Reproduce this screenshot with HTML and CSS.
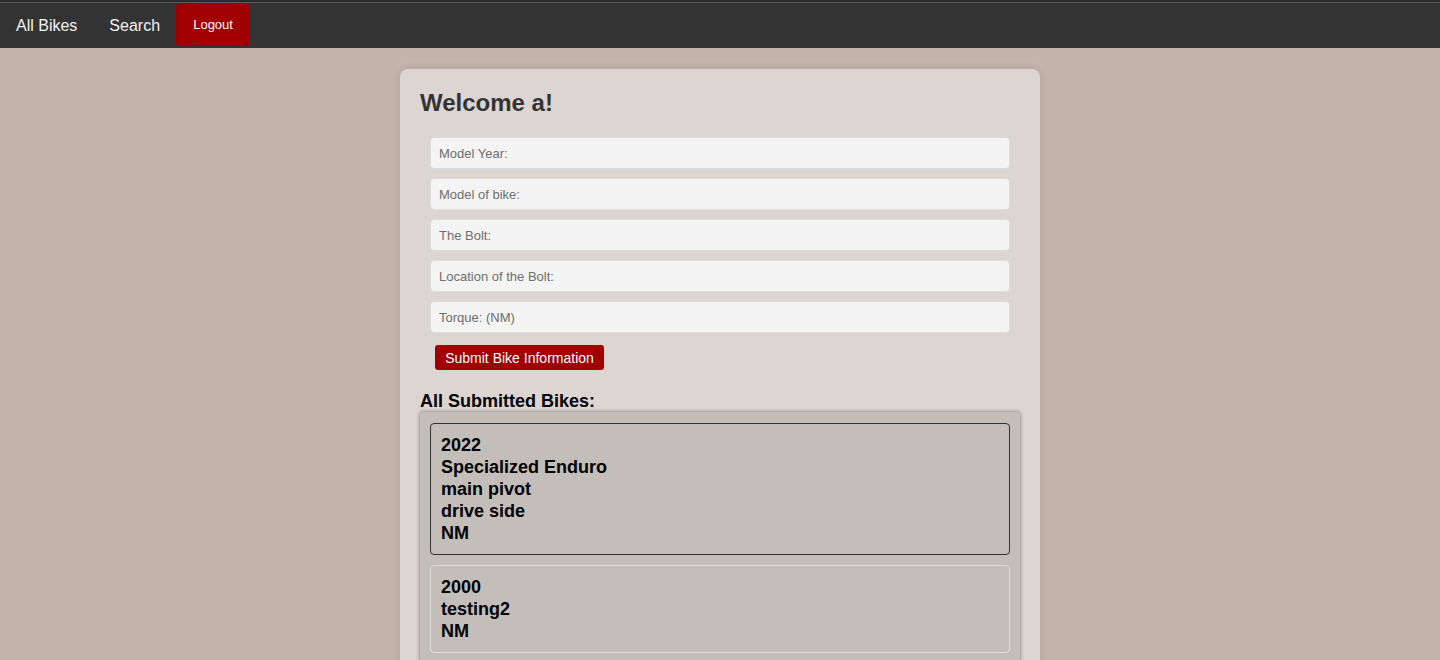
FILE: index.html
```html
<!DOCTYPE html>
<html>
<head>
<meta charset="utf-8">
<title>Bikes</title>
<link rel="stylesheet" href="styles.css">
</head>
<body>
<nav class="topnav">
  <a class="nav-link" href="#">All Bikes</a>
  <a class="nav-link" href="#">Search</a>
  <button class="logout">Logout</button>
</nav>
<main class="page">
  <section class="card">
    <h1 class="welcome">Welcome a!</h1>
    <form class="bike-form">
      <input class="field" placeholder="Model Year:">
      <input class="field" placeholder="Model of bike:">
      <input class="field" placeholder="The Bolt:">
      <input class="field" placeholder="Location of the Bolt:">
      <input class="field" placeholder="Torque: (NM)">
      <button type="button" class="submit">Submit Bike Information</button>
    </form>
    <h2 class="list-title">All Submitted Bikes:</h2>
    <div class="bike-list">
      <div class="bike active">
        <div>2022</div>
        <div>Specialized Enduro</div>
        <div>main pivot</div>
        <div>drive side</div>
        <div>NM</div>
      </div>
      <div class="bike">
        <div>2000</div>
        <div>testing2</div>
        <div>NM</div>
      </div>
    </div>
  </section>
</main>
</body>
</html>
```
FILE: styles.css
```css
* { box-sizing: border-box; }
html, body { margin: 0; padding: 0; }
body {
  background: #c4b4ac;
  font-family: "Liberation Sans", Arial, sans-serif;
  height: 660px;
  overflow: hidden;
}
.topnav {
  display: flex;
  align-items: flex-start;
  height: 48px;
  background: #333333;
  border-top: 2px solid #2a2a2a;
  box-shadow: inset 0 1px 0 #5a5a5a;
}
.nav-link {
  color: #f2f2f2;
  text-decoration: none;
  font-size: 16px;
  padding: 1px 16px 0;
  line-height: 46px;
}
.logout {
  margin-top: 2px;
  background: #a00000;
  color: #fff;
  border: none;
  border-radius: 3px;
  width: 74px;
  height: 41px;
  font-family: inherit;
  font-size: 13px;
  padding: 0;
}
.page {
  display: flex;
  justify-content: center;
  padding-top: 21px;
}
.card {
  width: 640px;
  background: #ddd5d2;
  border-radius: 8px;
  box-shadow: 0 0 10px rgba(0,0,0,0.1);
  padding: 18px 20px 20px;
  height: 620px;
}
.welcome {
  margin: 2px 0 20px;
  font-size: 24px;
  color: #333;
  font-weight: bold;
  line-height: 28px;
}
.bike-form {
  display: flex;
  flex-direction: column;
  gap: 9px;
  padding: 0 10px;
}
.field {
  height: 32px;
  width: 580px;
  background: #f4f4f4;
  border: 1px solid #dcdcdc;
  border-radius: 4px;
  padding: 0 8px;
  font-family: inherit;
  font-size: 13px;
  color: #333;
}
.field::placeholder { color: #6e6e6e; }
.submit {
  align-self: flex-start;
  margin-top: 3px;
  margin-left: 5px;
  background: #a00000;
  color: #fff;
  border: none;
  border-radius: 3px;
  height: 25px;
  width: 169px;
  padding: 0;
  font-family: inherit;
  font-size: 14px;
}
.list-title {
  margin: 21px 0 0;
  font-size: 18px;
  line-height: 21px;
  color: #000;
}
.bike-list {
  background: #c4bebb;
  border-radius: 4px;
  box-shadow: 0 0 4px rgba(0,0,0,0.45);
  padding: 11px 10px;
  display: flex;
  flex-direction: column;
  gap: 10px;
}
.bike {
  border: 1px solid #e0dcda;
  border-radius: 4px;
  padding: 10px 10px 10px;
  font-size: 18px;
  font-weight: bold;
  line-height: 22px;
  color: #000;
}
.bike.active { border-color: #333; }
```
